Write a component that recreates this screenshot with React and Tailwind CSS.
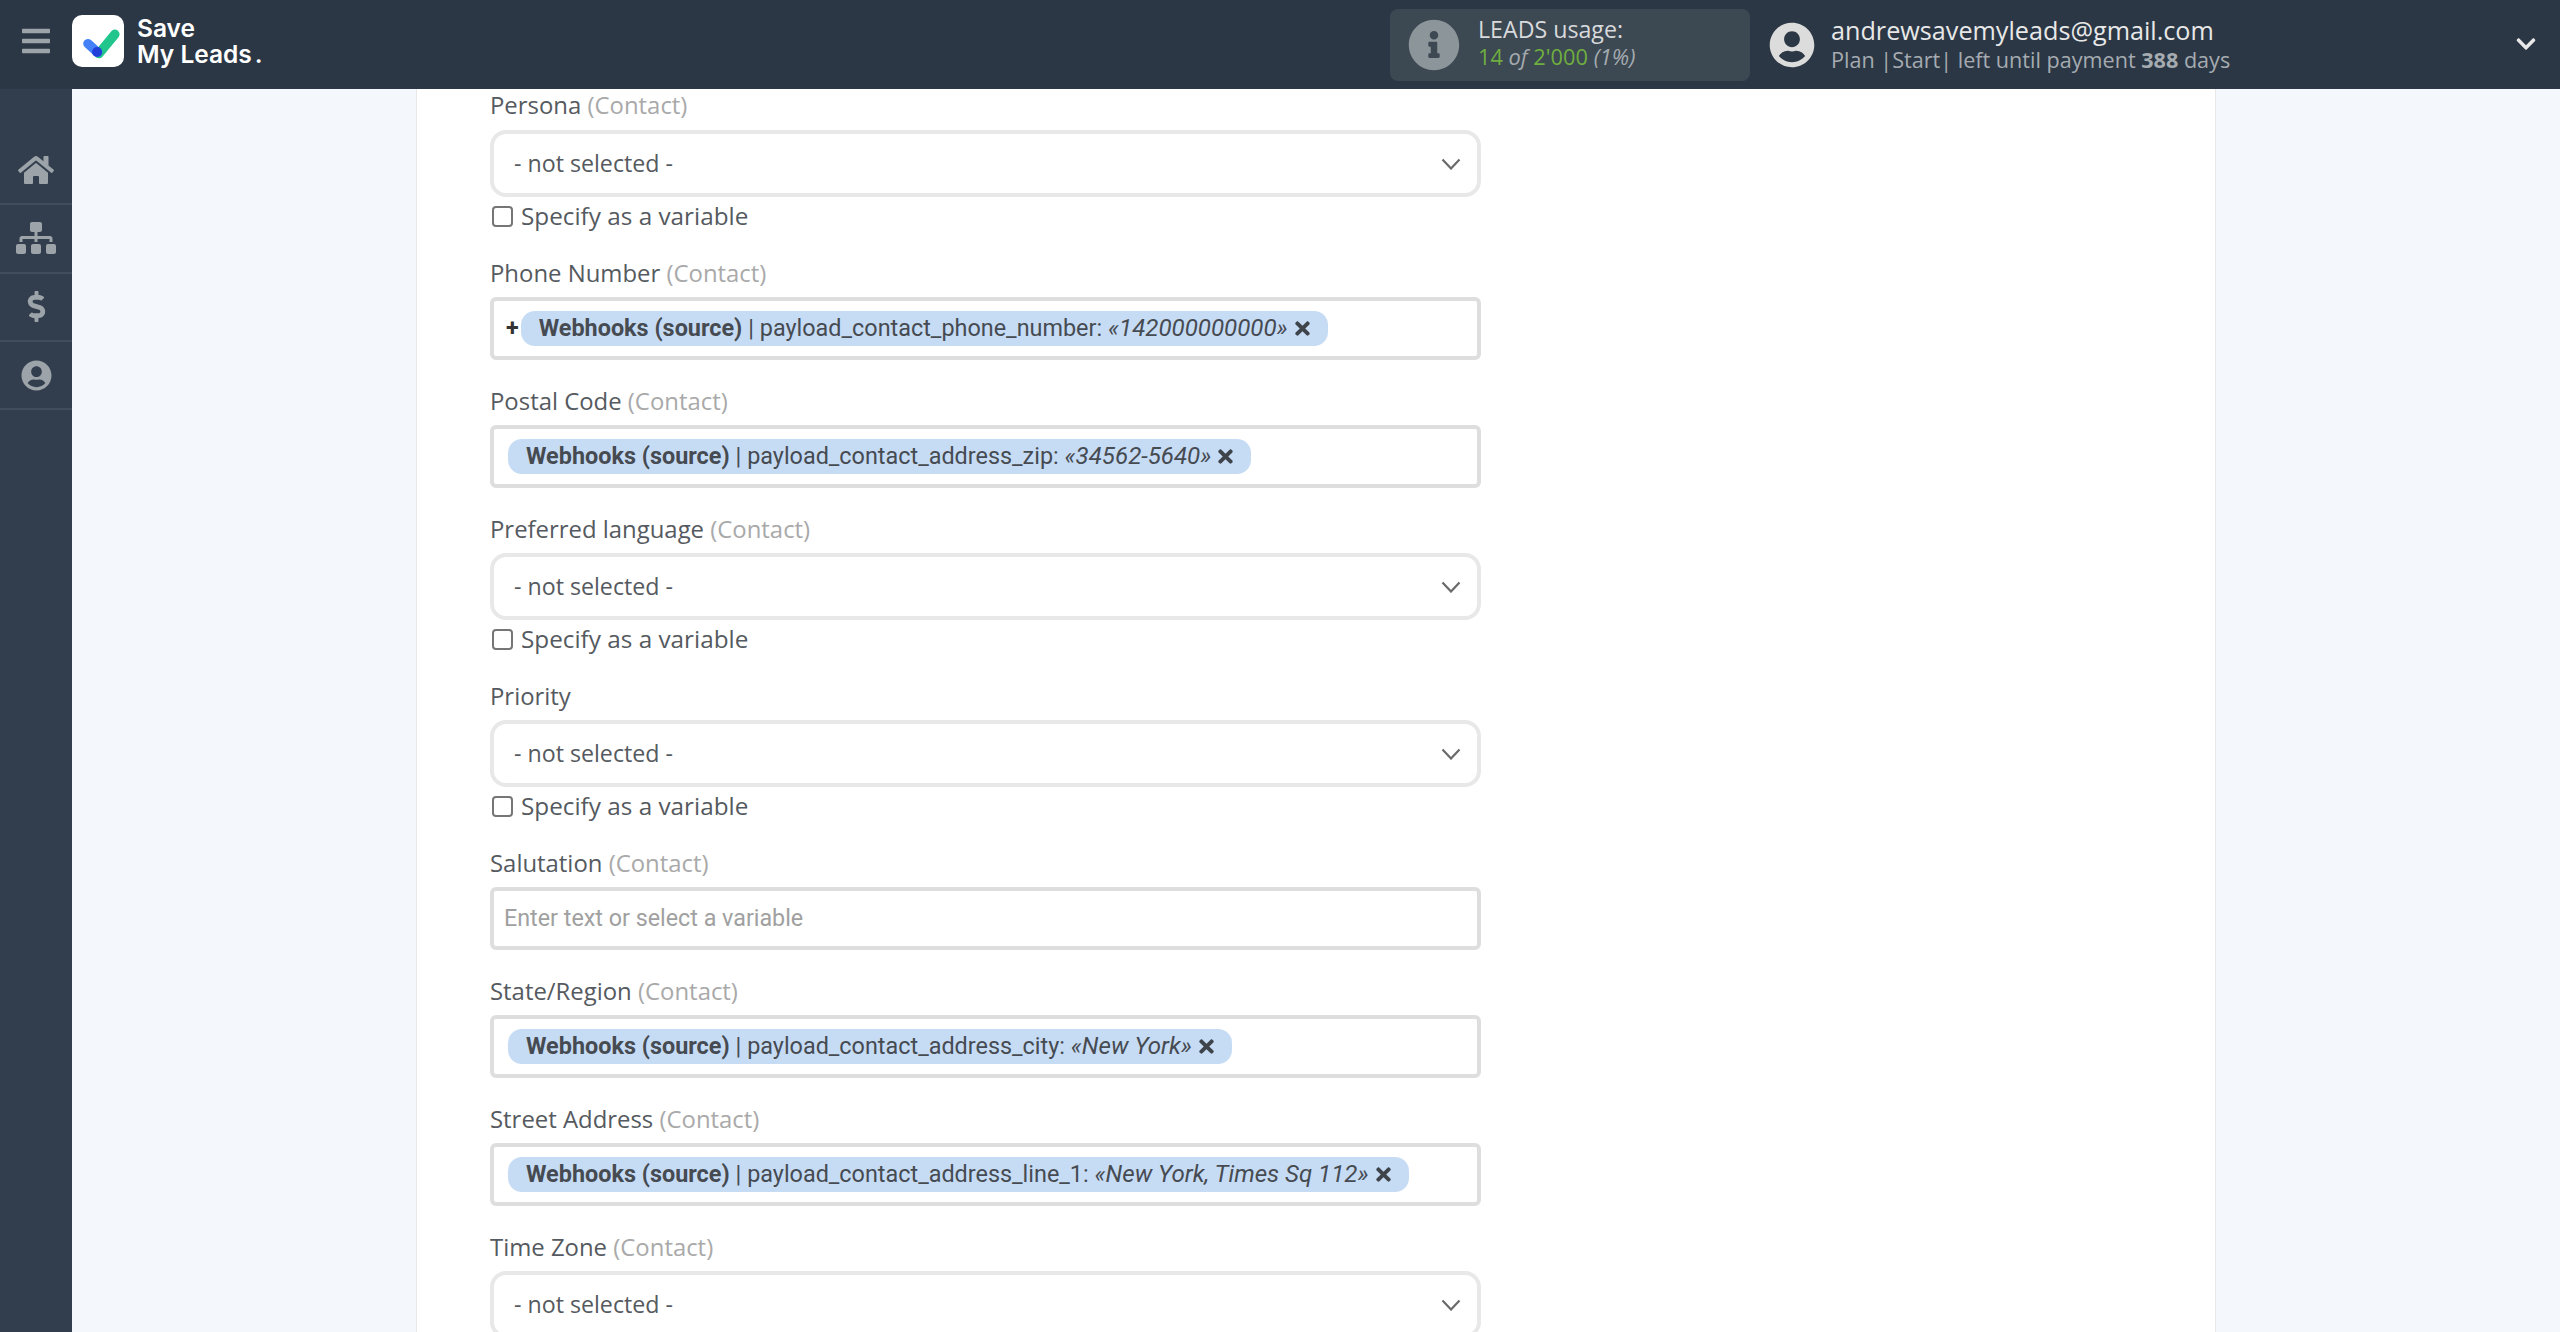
import React from "react";
import { FaHome, FaSitemap, FaDollarSign, FaUserCircle, FaInfoCircle, FaTimes, FaChevronDown, FaBars } from "react-icons/fa";

const Label = ({ name, note, className = "" }) => (
  <div className={`font-['Open_Sans',sans-serif] text-[23.9px] leading-[31px] text-[#555a60] font-medium ${className}`}>
    {name}
    {note && <span className="font-normal text-[#a9a9a9]"> {note}</span>}
  </div>
);

const Select = () => (
  <div className="h-[67px] w-[991px] rounded-[16px] border-[4px] border-[#e8e8e8] bg-white flex items-center justify-between pl-[20px] pr-[16px] font-['Open_Sans',sans-serif] text-[23.2px] text-[#555a60]">
    <span>- not selected -</span>
    <svg width="20" height="12" viewBox="0 0 20 12" fill="none" stroke="#6a6a6a" strokeWidth="2.2"><path d="M1.5 1.5 10 10.5l8.5-9" /></svg>
  </div>
);

const Check = () => (
  <div className="flex items-center h-[32px] mt-[3px] font-['Open_Sans',sans-serif] text-[24.3px] text-[#555a60] font-medium">
    <span className="w-[21px] h-[21px] ml-[2px] rounded-[4px] border-[2px] border-[#767676] bg-white mr-[8px]" />
    Specify as a variable
  </div>
);

const Chip = ({ field, value }) => (
  <span className="h-[35px] rounded-[14px] bg-[#c6dcf5] flex items-center pl-[18px] pr-[15px] font-['Roboto',sans-serif] text-[23.4px] text-[#464b52] whitespace-nowrap">
    <b className="font-bold">Webhooks (source)</b>
    <span className="ml-[6px]">| {field}: <i className="text-[24.1px]">«{value}»</i></span>
    <FaTimes className="ml-[4px] text-[#3f444b] text-[21px]" />
  </span>
);

const Input = ({ children }) => (
  <div className="h-[63px] w-[991px] rounded-[6px] border-[4px] border-[#dedede] bg-white flex items-center pl-[14px] font-['Roboto',sans-serif] text-[23.3px] text-[#a0a0a0]">
    {children}
  </div>
);

const Side = ({ children }) => (
  <div className="h-[68.3px] border-b-2 border-[#414d5c] flex items-center justify-center text-[#9ca3a9]">{children}</div>
);

export default function App() {
  return (
    <div className="h-[1332px] w-[2560px] overflow-hidden bg-[#f4f7fc] flex flex-col relative">
      <header className="h-[89px] bg-[#2b3745] flex items-center shrink-0 pb-[7px]">
        <div className="w-[72px] flex justify-center">
          <FaBars className="text-[#9ca3a9] text-[32px]" />
        </div>
        <div className="w-[52px] h-[52px] rounded-[10px] bg-white flex items-center justify-center">
          <svg width="44" height="44" viewBox="0 0 52 52">
            <path d="M27 42 46 19" stroke="#22c58b" strokeWidth="11" strokeLinecap="round" fill="none" transform="translate(0 -1)" />
            <path d="M14 29 25 39" stroke="#4481f8" strokeWidth="11" strokeLinecap="round" fill="none" />
            <circle cx="25" cy="39" r="6" fill="#2140d9" />
          </svg>
        </div>
        <div className="ml-[13px] font-['Inter',sans-serif] font-semibold text-white text-[24.5px] leading-[26px] w-[158px]">
          <div>Save</div>
          <div>My Leads<span className="ml-[3px]">.</span></div>
        </div>
        <div className="ml-[1095px] w-[360px] h-[72px] mt-[7px] rounded-[8px] bg-[#3c4852] flex items-center pl-[18px]">
          <FaInfoCircle className="text-[#8c9599] text-[52px]" />
          <div className="ml-[18px] -mt-[3px] font-['Open_Sans',sans-serif] leading-[28px]">
            <div className="text-[23.2px] text-[#d8dadc]">LEADS usage:</div>
            <div className="text-[21.8px] text-[#6fae3f]">14 <i className="text-[#a5abb0]">of</i> 2'000 <i className="text-[#a5abb0]">(1%)</i></div>
          </div>
        </div>
        <div className="ml-[19px] mt-[7px] flex items-center">
          <FaUserCircle className="text-[#dcdcdc] text-[46px]" />
          <div className="ml-[16px] font-['Open_Sans',sans-serif] leading-[29px]">
            <div className="text-[25.2px] text-[#e8e8e8]">andrewsavemyleads@gmail.com</div>
            <div className="text-[21.6px] text-[#a5abb0]">Plan |Start| left until payment <b>388</b> days</div>
          </div>
        </div>
        <FaChevronDown className="absolute left-[2515px] top-[33px] text-[#e8e8e8] text-[22px]" />
      </header>
      <div className="flex flex-1 min-h-0">
        <aside className="w-[72px] bg-[#323e4d] pt-[48px] shrink-0">
          <Side><FaHome className="text-[36px]" /></Side>
          <Side><FaSitemap className="text-[40px]" /></Side>
          <Side><FaDollarSign className="text-[31px]" /></Side>
          <Side><FaUserCircle className="text-[31px]" /></Side>
        </aside>
        <main className="ml-[344px] w-[1800px] bg-white border-x border-[#e8e8e8] pl-[73px] overflow-hidden">
          <Label name="Persona" note="(Contact)" className="mt-[0px] mb-[10px]" />
          <Select />
          <Check />
          <Label name="Phone Number" note="(Contact)" className="mt-[25px] mb-[9px]" />
          <Input>
            <span className="font-bold text-[#333] mr-[2px] -ml-[2px]">+</span>
            <Chip field="payload_contact_phone_number" value="142000000000" />
          </Input>
          <Label name="Postal Code" note="(Contact)" className="mt-[25px] mb-[9px]" />
          <Input><Chip field="payload_contact_address_zip" value="34562-5640" /></Input>
          <Label name="Preferred language" note="(Contact)" className="mt-[25px] mb-[9px]" />
          <Select />
          <Check />
          <Label name="Priority" className="mt-[25px] mb-[9px]" />
          <Select />
          <Check />
          <Label name="Salutation" note="(Contact)" className="mt-[25px] mb-[9px]" />
          <Input><span className="-ml-[4px]">Enter text or select a variable</span></Input>
          <Label name="State/Region" note="(Contact)" className="mt-[25px] mb-[9px]" />
          <Input><Chip field="payload_contact_address_city" value="New York" /></Input>
          <Label name="Street Address" note="(Contact)" className="mt-[25px] mb-[9px]" />
          <Input><Chip field="payload_contact_address_line_1" value="New York, Times Sq 112" /></Input>
          <Label name="Time Zone" note="(Contact)" className="mt-[25px] mb-[9px]" />
          <Select />
        </main>
      </div>
    </div>
  );
}
